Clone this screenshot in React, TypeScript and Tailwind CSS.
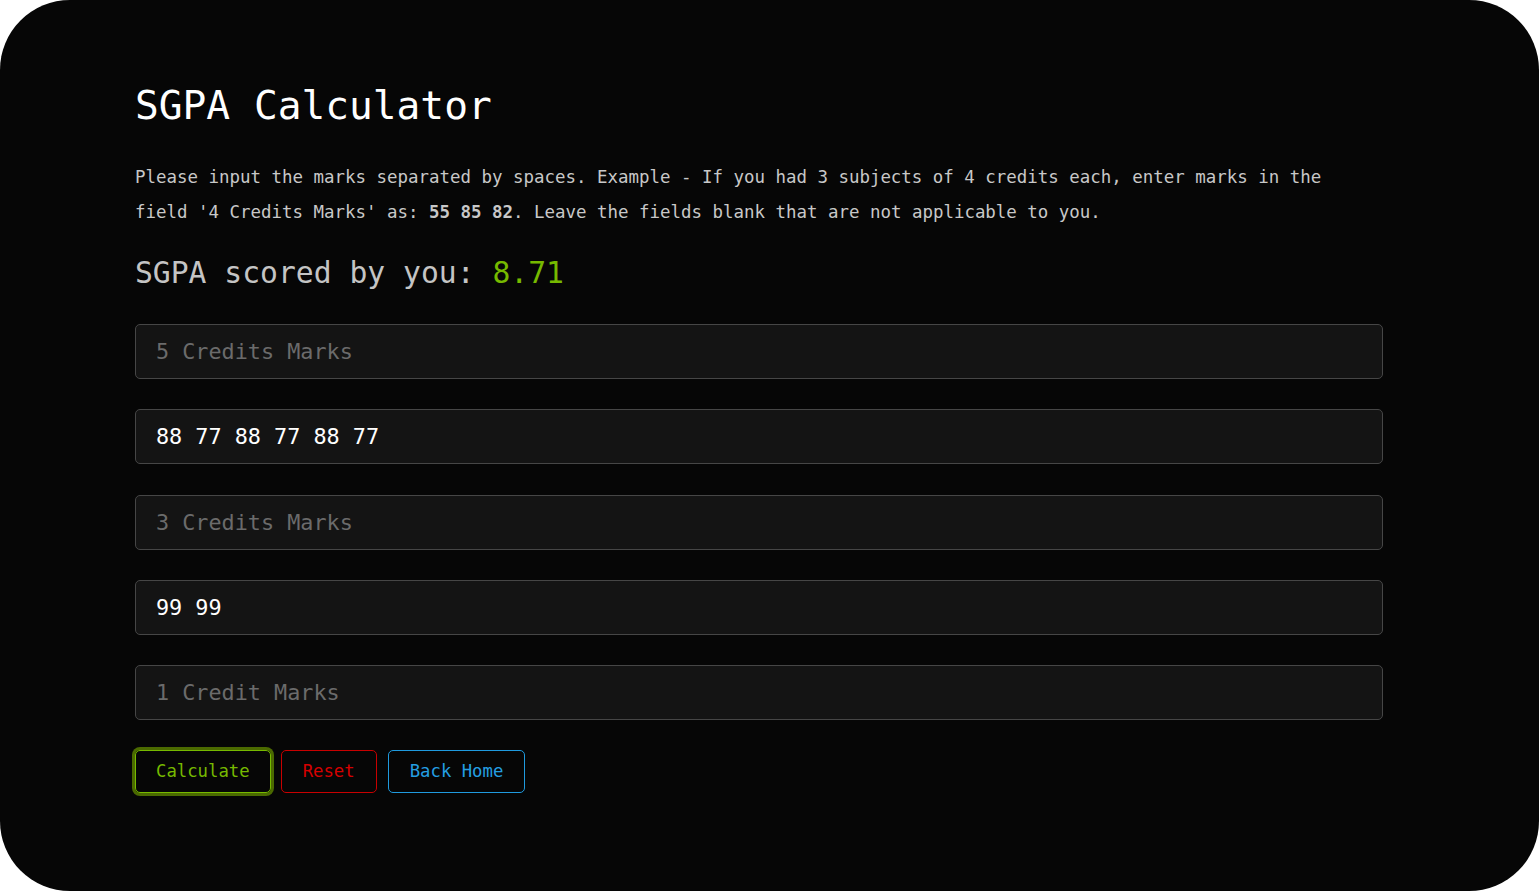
import { useState } from "react";

const fields = [
  { label: "5 Credits Marks", value: "" },
  { label: "4 Credits Marks", value: "88 77 88 77 88 77" },
  { label: "3 Credits Marks", value: "" },
  { label: "2 Credits Marks", value: "99 99" },
  { label: "1 Credit Marks", value: "" },
];

export default function App() {
  const [values, setValues] = useState(fields.map((f) => f.value));

  return (
    <div className="h-[891px] bg-white">
      <div
        className="h-full bg-[#060606] rounded-[70px] pl-[135px] pt-[80px]"
        style={{ fontFamily: '"DejaVu Sans Mono", "Liberation Mono", monospace' }}
      >
        <div className="w-[1248px]">
          <h1 className="text-[39.5px] leading-[50px] text-white font-normal">
            SGPA Calculator
          </h1>
          <p className="mt-[29.5px] text-[17.45px] leading-[35px] text-[#c8c8c8]">
            Please input the marks separated by spaces. Example - If you had 3
            subjects of 4 credits each, enter marks in the field '4 Credits
            Marks' as: <b>55 85 82</b>. Leave the fields blank that are not
            applicable to you.
          </p>
          <h2 className="mt-[23.5px] text-[29.7px] leading-[40px] text-[#c4c4c4] font-normal">
            SGPA scored by you: <span className="text-[#76b900]">8.71</span>
          </h2>

          <div className="mt-[31px] flex flex-col gap-[30.25px]">
            {fields.map((f, i) => (
              <input
                key={f.label}
                type="text"
                placeholder={f.label}
                value={values[i]}
                onChange={(e) => {
                  const next = [...values];
                  next[i] = e.target.value;
                  setValues(next);
                }}
                className="h-[55px] w-full rounded-[5px] border border-[#464646] bg-[#141414] pl-5 text-[21.8px] text-white placeholder:text-[#6b6b6b] outline-none"
              />
            ))}
          </div>

          <div className="mt-[30px] flex gap-[10px]">
            <button className="h-[43px] px-[20px] rounded-[5px] border border-[#76b900] text-[#76b900] text-[17.3px] shadow-[0_0_0_3px_#4b6a00]">
              Calculate
            </button>
            <button className="h-[43px] px-[21px] rounded-[5px] border border-[#c80000] text-[#d40000] text-[17.3px]">
              Reset
            </button>
            <button className="ml-px h-[43px] px-[21px] rounded-[5px] border border-[#1f9ade] text-[#249fe2] text-[17.3px]">
              Back Home
            </button>
          </div>
        </div>
      </div>
    </div>
  );
}
